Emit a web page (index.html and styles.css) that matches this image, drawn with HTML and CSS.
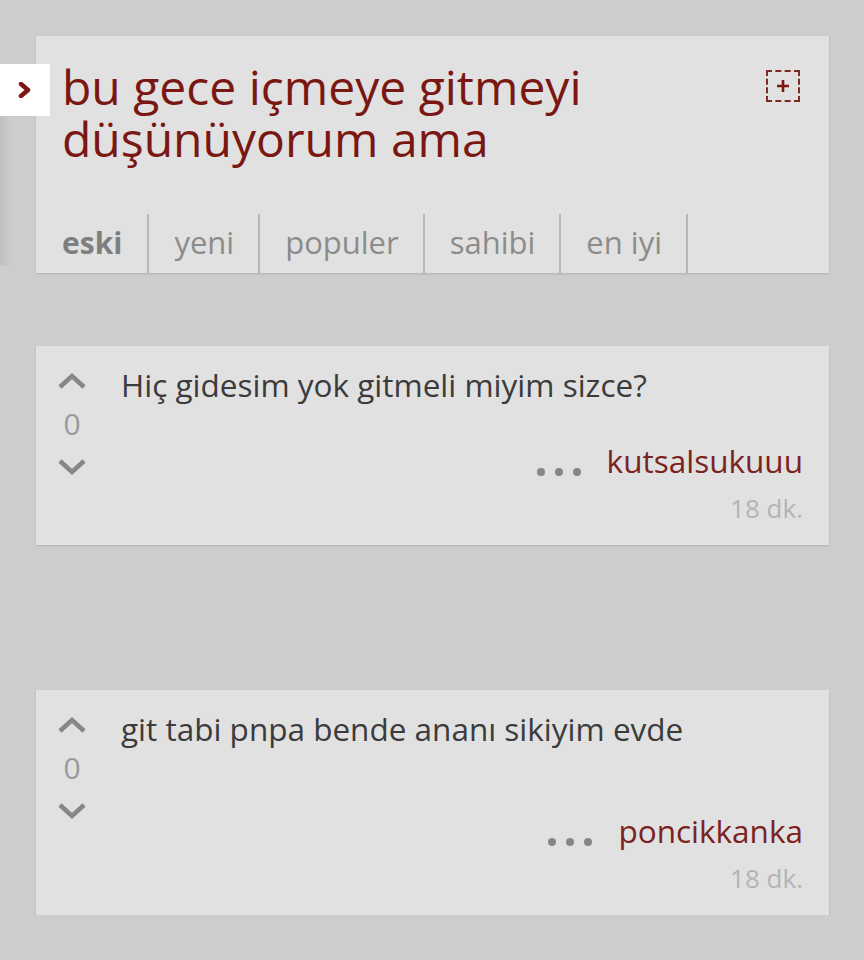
FILE: index.html
```html
<!DOCTYPE html>
<html lang="tr">
<head>
  <meta charset="UTF-8" />
  <meta name="viewport" content="width=device-width, initial-scale=1.0" />
  <title>bu gece içmeye gitmeyi düşünüyorum ama</title>
  <link rel="stylesheet" href="styles.css">
</head>
<body>

  <a class="drawer-handle" href="#">
    <svg width="16" height="16" viewBox="0 0 16 16"><polyline points="4,2 11,8 4,14" fill="none" stroke="#7b1712" stroke-width="4.5" stroke-linejoin="round" stroke-linecap="round"/></svg>
  </a>
  <div class="drawer-shadow"></div>

  <main class="thread">

    <section class="card topic">
      <div class="topic-head">
        <h1 class="topic-title">bu gece içmeye gitmeyi düşünüyorum ama</h1>
        <button class="follow-btn" aria-label="takip et">
          <svg width="14" height="14" viewBox="0 0 14 14"><path d="M7 1v12M1 7h12" stroke="#7b1712" stroke-width="2.6"/></svg>
        </button>
      </div>
      <ul class="sort-tabs">
        <li class="active">eski</li>
        <li>yeni</li>
        <li>populer</li>
        <li>sahibi</li>
        <li>en iyi</li>
      </ul>
    </section>

    <article class="card comment">
      <div class="vote">
        <svg class="chev" width="28" height="16" viewBox="0 0 28 16"><polyline points="2,14 14,3 26,14" fill="none" stroke="#878787" stroke-width="4.5"/></svg>
        <span class="score">0</span>
        <svg class="chev" width="28" height="16" viewBox="0 0 28 16"><polyline points="2,2 14,13 26,2" fill="none" stroke="#878787" stroke-width="4.5"/></svg>
      </div>
      <div class="comment-body">
        <p class="comment-text">Hiç gidesim yok gitmeli miyim sizce?</p>
        <div class="comment-meta">
          <span class="more"><i></i><i></i><i></i></span>
          <a class="author" href="#">kutsalsukuuu</a>
        </div>
        <div class="time">18 dk.</div>
      </div>
    </article>

    <div class="ad-slot"></div>

    <article class="card comment">
      <div class="vote">
        <svg class="chev" width="28" height="16" viewBox="0 0 28 16"><polyline points="2,14 14,3 26,14" fill="none" stroke="#878787" stroke-width="4.5"/></svg>
        <span class="score">0</span>
        <svg class="chev" width="28" height="16" viewBox="0 0 28 16"><polyline points="2,2 14,13 26,2" fill="none" stroke="#878787" stroke-width="4.5"/></svg>
      </div>
      <div class="comment-body">
        <p class="comment-text long">git tabi pnpa bende ananı sikiyim evde</p>
        <div class="comment-meta">
          <span class="more"><i></i><i></i><i></i></span>
          <a class="author" href="#">poncikkanka</a>
        </div>
        <div class="time">18 dk.</div>
      </div>
    </article>

  </main>

</body>
</html>
```

FILE: styles.css
```css
body {
  font-family: 'Open Sans', 'Noto Sans', sans-serif;
  margin: 0;
  background-color: #cdcdcd;
  color: #3b3b3b;
}

.drawer-handle {
  position: absolute;
  top: 64px;
  left: 0;
  width: 50px;
  height: 52px;
  background: #fff;
  display: flex;
  align-items: center;
  justify-content: flex-end;
  padding-right: 17px;
  box-sizing: border-box;
  z-index: 2;
}
.drawer-shadow {
  position: absolute;
  top: 116px;
  left: 0;
  width: 12px;
  height: 150px;
  background: linear-gradient(to right, rgba(0, 0, 0, 0.06), rgba(0, 0, 0, 0));
}

.thread {
  padding: 36px 35px 0 36px;
  display: flex;
  flex-direction: column;
}

.card {
  background-color: #e1e1e1;
  box-shadow: 0 1px 2px rgba(0, 0, 0, 0.15);
  margin-bottom: 73px;
}
.card:last-child {
  margin-bottom: 0;
}

/* topic header */
.topic-head {
  display: flex;
  justify-content: space-between;
  align-items: flex-start;
  padding: 25px 29px 0 26px;
}
.topic-title {
  margin: 0;
  font-size: 48px;
  line-height: 52px;
  font-weight: normal;
  color: #7b1712;
  max-width: 660px;
}
.follow-btn {
  margin-top: 9px;
  width: 34px;
  height: 32px;
  background: none;
  border: 2px dashed #7b2a22;
  display: flex;
  align-items: center;
  justify-content: center;
  padding: 0;
}

.sort-tabs {
  list-style: none;
  display: flex;
  margin: 49px 0 0;
  padding: 0;
}
.sort-tabs li {
  font-size: 31px;
  line-height: 57px;
  height: 59px;
  padding: 0 24px 0 25px;
  color: #8c8c8c;
  border-right: 2px solid #b8b8b8;
}
.sort-tabs li.active {
  font-weight: bold;
  font-size: 30px;
  padding: 0 25px 0 26px;
  color: #7f7f7f;
}

/* comments */
.comment {
  display: flex;
  padding: 27px 26px 19px 16px;
}
.vote {
  width: 40px;
  display: flex;
  flex-direction: column;
  align-items: center;
  gap: 16px;
  margin-right: 29px;
}
.chev {
  display: block;
}
.score {
  font-size: 30px;
  line-height: 38px;
  color: #9a9a9a;
}
.comment-body {
  flex: 1;
  margin-top: -6px;
}
.comment-text {
  margin: 0 0 39px;
  font-size: 31.5px;
  line-height: 36px;
  color: #3b3b3b;
}
.comment-text.long {
  margin-bottom: 65px;
}
.comment-meta {
  display: flex;
  justify-content: flex-end;
  align-items: flex-end;
  gap: 26px;
}
.more {
  display: flex;
  gap: 10px;
  padding-bottom: 4px;
}
.more i {
  width: 8px;
  height: 8px;
  border-radius: 50%;
  background: #868686;
}
.author {
  font-size: 31.5px;
  line-height: 38px;
  color: #7b2320;
  text-decoration: none;
}
.time {
  text-align: right;
  font-size: 26px;
  line-height: 36px;
  margin-top: 10px;
  color: #b4b4b4;
}

.ad-slot {
  height: 0;
  margin-bottom: 72px;
}
```
